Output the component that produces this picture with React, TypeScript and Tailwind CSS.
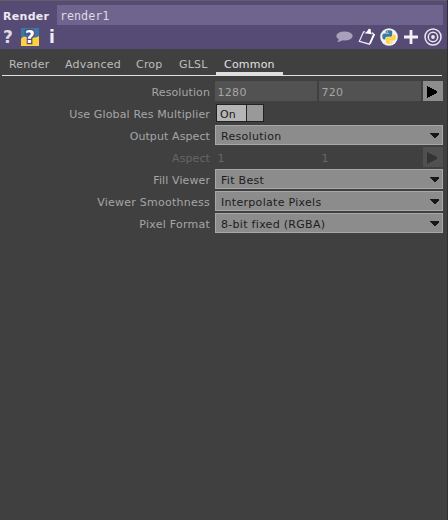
const tabs = [
  { name: 'Render', cls: 'ml-[9px] w-[56px]' },
  { name: 'Advanced', cls: 'w-[71px]' },
  { name: 'Crop', cls: 'w-[43px]' },
  { name: 'GLSL', cls: 'w-[37px]' },
];

function Label({ children, dim, spacing = 'tracking-[0.1px]' }: { children: string; dim?: boolean; spacing?: string }) {
  return (
    <div className={`w-[211px] shrink-0 whitespace-nowrap pr-[1px] pt-px text-right ${spacing} ${dim ? 'text-[#656565]' : 'text-[#a6a6a6]'}`}>
      {children}
    </div>
  );
}

function Pair({ label, a, b, dim }: { label: string; a: string; b: string; dim?: boolean }) {
  const field = dim ? 'text-[#656565]' : 'bg-[#525252] text-[#a6a6a6]';
  return (
    <div className="flex h-[22px]">
      <Label dim={dim}>{label}</Label>
      <div className={`ml-[4px] h-[20px] w-[102px] pl-[2.5px] pt-px tracking-[0.3px] ${field}`}>{a}</div>
      <div className={`ml-[2px] h-[20px] w-[102px] pl-[2.5px] pt-px tracking-[0.3px] ${field}`}>{b}</div>
      <div className={`ml-[2px] flex h-[20px] w-[20px] items-center pl-[4px] pt-px ${dim ? 'bg-[#505050] text-[#343434]' : 'bg-[#8c8c8c] text-black'}`}>
        <svg width="10" height="12" viewBox="0 0 10 12" shapeRendering="crispEdges" fill="currentColor"><path d="M0 0L10 5V7L0 12Z" /></svg>
      </div>
    </div>
  );
}

function Select({ label, value, labelSpacing }: { label: string; value: string; labelSpacing?: string }) {
  return (
    <div className="flex h-[22px]">
      <Label spacing={labelSpacing}>{label}</Label>
      <div className="ml-[4px] flex h-[20px] w-[228px] justify-between border border-[#a8a8a8] bg-[#8c8c8c] pl-[5px] pr-[3px] text-[#1c1c1c]">
        <span className="tracking-[0.3px]">{value}</span>
        <svg width="9" height="5" viewBox="0 0 9 5" shapeRendering="crispEdges" fill="#171717" className="mt-[7px]"><path d="M0 0H9V1L5 5H4L0 1Z" /></svg>
      </div>
    </div>
  );
}

function Python() {
  return (
    <svg width="18" height="18" viewBox="0 0 18 18">
      <circle cx="9" cy="9" r="8.8" fill="#f2f1f4" />
      <path d="M5.6 4.8V3.5C5.6 1.8 12.2 1.8 12.2 3.5V7C12.2 8.2 11.4 8.8 10.4 8.8H7C5.8 8.8 5.3 9.7 5.3 11.5H4C1.8 11.5 1.6 5.6 4 5.6H9.2V4.9Z" fill="#397ba5" />
      <path d="M12.4 13.2V14.5C12.4 16.2 5.8 16.2 5.8 14.5V11C5.8 9.8 6.6 9.2 7.6 9.2H11C12.2 9.2 12.8 8.3 12.8 6.5H14C16.4 6.5 16.6 12.4 14 12.4H8.8V13.1Z" fill="#ffd33d" />
      <circle cx="7.3" cy="3.8" r=".6" fill="#fff" /><circle cx="10.7" cy="14.2" r=".6" fill="#fff" />
    </svg>
  );
}

export default function App() {
  return (
    <div className="h-[520px] w-[448px] overflow-hidden border-r border-[#303030] bg-[#404040] font-['DejaVu_Sans',sans-serif] text-[11px]">
      <header className="h-[49px] border-t border-[#606064] bg-[#564b75] pt-[4px]">
        <div className="flex h-[20px] leading-[22px]">
          <div className="w-[57px] shrink-0 pl-[3px] pt-px font-bold tracking-[0.3px] text-[#ebe9ef]">Render</div>
          <div className="w-[386px] bg-[#6f648d] pl-[3px] font-['DejaVu_Sans_Mono',monospace] text-[11.7px] leading-[23px] text-[#dddbe3]">render1</div>
        </div>
        <div className="flex h-[24px] items-center">
          <span className="w-[21px] pl-[3px] text-[17px] font-bold leading-[24px] text-[#dedbe6]">?</span>
          <svg width="18" height="18" viewBox="0 0 18 18">
            <path fill="#3977a7" d="M0 0H18V10H0Z" /><path fill="#ffd141" d="M0 11C1 9 3 8.6 5 9L9 10L13 9.5C15 9.5 16 9 18 8V18H0Z" />
            <text x="4" y="15" fontFamily="DejaVu Sans" fontWeight="bold" fontSize="17" fill="#fff" stroke="#54477d" strokeWidth="2.6" paintOrder="stroke">?</text>
          </svg>
          <span className="ml-[10px] text-[17px] font-bold leading-[24px] text-[#eeecf3]">i</span>
          <div className="ml-auto mr-[5px] flex h-[18px] items-center">
            <svg width="17" height="12" viewBox="0 0 17 12" fill="#a9a1bc" className="mr-[5px]"><ellipse cx="8.5" cy="5" rx="8.2" ry="4.6" /><path d="M3 7C3 9 2 10 1 11C4 11 6 10 7 8Z" /></svg>
            <svg width="18" height="18" viewBox="0 0 18 18" className="mr-[4px]">
              <path d="M7 3.7L5.5 4L1.3 13.3L11.5 16.2L16.3 6.8L14 4.5" fill="none" stroke="#f0eef4" strokeWidth="1.2" />
              <path d="M6.5 5.2L9 3.4L10.8 .8L12.8 1.3V4L14 6.2Z" fill="#fff" /><path d="M16 6L12 15.5" stroke="#fff" strokeWidth="1.8" />
            </svg>
            <Python />
            <svg width="14" height="14" viewBox="0 0 14 14" className="ml-[6px] mr-[6px]"><path d="M0 7H14M7 0V14" stroke="#f2f0f5" strokeWidth="2.8" /></svg>
            <svg width="18" height="18" viewBox="0 0 18 18" fill="none" stroke="#e9e6ef"><circle cx="9" cy="9" r="8" strokeWidth="1.5" /><circle cx="9" cy="9" r="4.7" strokeWidth="1.5" /><circle cx="9" cy="9" r="1.9" fill="#e9e6ef" stroke="none" /></svg>
          </div>
        </div>
      </header>
      <nav className="mt-[6px] flex h-[20px] leading-[19px] tracking-[0.2px] text-[#bdbdbd]">
        {tabs.map((t) => <div key={t.name} className={t.cls}>{t.name}</div>)}
        <div className="w-[67px] border-b-[3px] border-[#dedede] pl-[8px] text-[#e0e0e0]">Common</div>
      </nav>
      <div className="ml-[2px] h-px w-[440px] bg-[#e0e0e0]" />
      <main className="mt-[5px] leading-[22px]">
        <Pair label="Resolution" a="1280" b="720" />
        <div className="flex h-[22px]">
          <Label spacing="tracking-[0.15px]">Use Global Res Multiplier</Label>
          <div className="ml-[5px] mt-[1px] flex h-[18px] w-[48px] border border-[#222] bg-[#999] leading-[19px] text-[#191919]">
            <div className="w-[30px] border-r border-[#222] bg-[#b5b5b5] pl-[3px] tracking-[0.2px]">On</div>
          </div>
        </div>
        <Select label="Output Aspect" value="Resolution" labelSpacing="tracking-[0.1px]" />
        <Pair label="Aspect" a="1" b="1" dim />
        <Select label="Fill Viewer" value="Fit Best" />
        <Select label="Viewer Smoothness" value="Interpolate Pixels" labelSpacing="tracking-[0.25px]" />
        <Select label="Pixel Format" value="8-bit fixed (RGBA)" labelSpacing="tracking-[0.25px]" />
      </main>
    </div>
  );
}
